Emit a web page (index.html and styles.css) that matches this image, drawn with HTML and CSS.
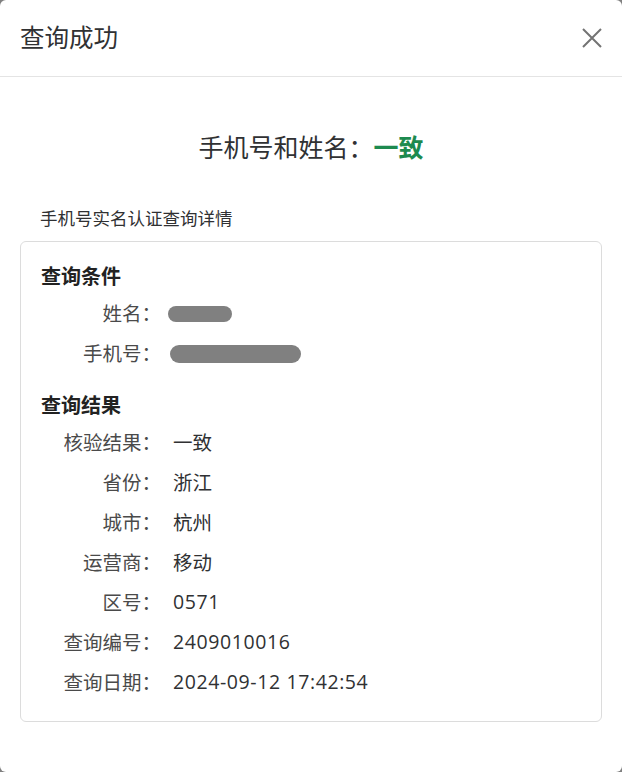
FILE: index.html
```html
<!DOCTYPE html>
<html lang="zh-CN">
<head>
    <meta charset="UTF-8">
    <meta name="viewport" content="width=device-width, initial-scale=1.0">
    <title>查询成功</title>
    <link rel="stylesheet" href="styles.css">
</head>
<body>
    <div class="dialog">
        <div class="dialog-header">
            <span class="dialog-title">查询成功</span>
            <button class="close-btn" aria-label="关闭">
                <svg width="20" height="20" viewBox="0 0 20 20">
                    <path d="M1 1L19 19M19 1L1 19" stroke="#737373" stroke-width="2" fill="none"/>
                </svg>
            </button>
        </div>
        <div class="dialog-body">
            <div class="result-title">手机号和姓名：<span class="result-ok">一致</span></div>
            <div class="detail-caption">手机号实名认证查询详情</div>
            <div class="detail-card">
                <div class="section-title">查询条件</div>
                <div class="row">
                    <span class="label">姓名：</span>
                    <span class="value"><span class="masked masked-name"></span></span>
                </div>
                <div class="row">
                    <span class="label">手机号：</span>
                    <span class="value"><span class="masked masked-phone"></span></span>
                </div>

                <div class="section-title second">查询结果</div>
                <div class="row">
                    <span class="label">核验结果：</span>
                    <span class="value">一致</span>
                </div>
                <div class="row">
                    <span class="label">省份：</span>
                    <span class="value">浙江</span>
                </div>
                <div class="row">
                    <span class="label">城市：</span>
                    <span class="value">杭州</span>
                </div>
                <div class="row">
                    <span class="label">运营商：</span>
                    <span class="value">移动</span>
                </div>
                <div class="row">
                    <span class="label">区号：</span>
                    <span class="value num">0571</span>
                </div>
                <div class="row">
                    <span class="label">查询编号：</span>
                    <span class="value num">2409010016</span>
                </div>
                <div class="row">
                    <span class="label">查询日期：</span>
                    <span class="value num">2024-09-12 17:42:54</span>
                </div>
            </div>
        </div>
    </div>
</body>
</html>
```

FILE: styles.css
```css
:root {
    --backdrop: #808080;
    --text-color: #303133;
    --label-color: #4a4a4a;
    --line-color: #e4e4e4;
    --card-border: #dcdcdc;
    --ok-color: #1d8a4f;
}

body {
    margin: 0;
    background: var(--backdrop);
    font-family: "Open Sans", "Noto Sans CJK SC", sans-serif;
    color: var(--text-color);
}

.dialog {
    height: 772px;
    background: white;
    border-radius: 6px;
    overflow: hidden;
}

.dialog-header {
    height: 76px;
    padding: 0 18px 0 20px;
    border-bottom: 1px solid var(--line-color);
    display: flex;
    align-items: center;
    justify-content: space-between;
}

.dialog-title {
    font-size: 24.5px;
    line-height: 32px;
}

.close-btn {
    border: none;
    background: none;
    padding: 0;
    width: 24px;
    height: 24px;
    display: flex;
    align-items: center;
    justify-content: center;
    cursor: pointer;
}

.dialog-body {
    padding: 0 20px;
}

.result-title {
    margin-top: 50px;
    text-align: center;
    font-size: 25px;
    line-height: 40px;
}

.result-ok {
    color: var(--ok-color);
    font-weight: bold;
}

.detail-caption {
    margin: 39px 0 11px 20px;
    font-size: 17.5px;
    line-height: 24px;
}

.detail-card {
    border: 1px solid var(--card-border);
    border-radius: 6px;
    padding: 20px 20px 20px;
}

.section-title {
    font-size: 20px;
    line-height: 30px;
    font-weight: bold;
    color: #222;
}

.section-title.second {
    margin-top: 19px;
}

.row {
    display: flex;
    align-items: center;
    height: 40px;
    font-size: 19.5px;
}

.label {
    width: 120px;
    text-align: right;
    color: var(--label-color);
}

.value {
    margin-left: 12px;
}

.value.num {
    letter-spacing: 0.6px;
}

.masked {
    display: inline-block;
    vertical-align: middle;
    background: #808080;
    border-radius: 9px;
}

.masked-name {
    width: 64px;
    height: 16px;
    margin-left: -5px;
}

.masked-phone {
    width: 131px;
    height: 18px;
    margin-left: -3px;
}
```
